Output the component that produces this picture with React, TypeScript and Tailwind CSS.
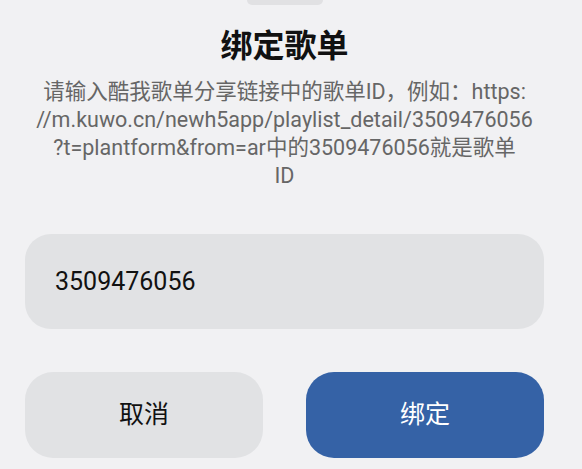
export default function App() {
  const font = { fontFamily: 'Roboto, "Noto Sans CJK SC", sans-serif' }

  return (
    <div
      className="w-full h-[469px] overflow-hidden bg-[#f1f1f3] pl-[25px] pr-[38px] flex flex-col items-stretch"
      style={font}
    >
      {/* drag handle */}
      <div className="self-center w-[76px] h-[5px] rounded-b-full bg-[#e1e1e3]" />

      <h1 className="mt-[21px] text-center text-[32px] leading-[40px] font-bold text-[#111]">
        绑定歌单
      </h1>

      <p className="mt-[12px] text-center text-[21.5px] leading-[28px] text-[#666]">
        <span className="block whitespace-nowrap">请输入酷我歌单分享链接中的歌单ID，例如：https:</span>
        <span className="block whitespace-nowrap">//m.kuwo.cn/newh5app/playlist_detail/3509476056</span>
        <span className="block whitespace-nowrap">?t=plantform&amp;from=ar中的3509476056就是歌单</span>
        <span className="block whitespace-nowrap">ID</span>
      </p>

      <div className="mt-[44px] h-[95px] rounded-[26px] bg-[#e1e2e4] flex items-center pl-[30px]">
        <span className="text-[25px] text-[#111]">3509476056</span>
      </div>

      <div className="mt-[43px] grid grid-cols-2 gap-[43px]">
        <button className="h-[86px] rounded-[28px] bg-[#e1e2e4] text-[25px] text-[#111]">
          取消
        </button>
        <button className="h-[86px] rounded-[28px] bg-[#3562a6] text-[25px] text-white">
          绑定
        </button>
      </div>
    </div>
  )
}
